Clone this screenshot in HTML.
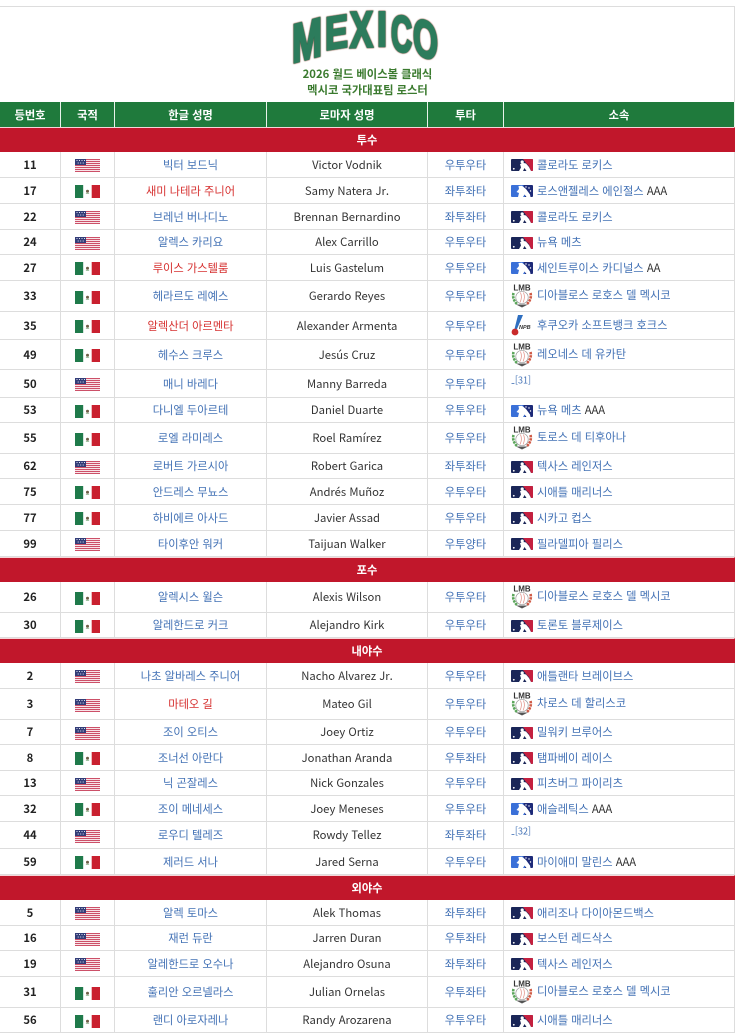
<!DOCTYPE html>
<html lang="ko"><head><meta charset="utf-8"><title>멕시코 로스터</title>
<style>
html,body{margin:0;padding:0;background:#fff;width:736px;height:1035px;overflow:hidden}
body{font-family:"Liberation Sans","Noto Sans CJK KR",sans-serif}
table{position:absolute;left:0;top:6px;width:735px;table-layout:fixed;border-collapse:separate;border-spacing:0;border-top:1px solid #ddd;font-family:"Noto Sans CJK KR","Liberation Sans",sans-serif;font-size:11.25px;line-height:14px;color:#333}
td,th{padding:0;box-sizing:border-box;border-right:1px solid #ddd;border-bottom:1px solid #ddd;text-align:center;overflow:hidden;white-space:nowrap}
tr.h th{background:#1f7a3c;color:#fff;font-weight:700;border-color:#e8f2ea;border-bottom:0;height:25px}
tr.s td{background:#c1172b;color:#fff;font-weight:700;border:0;border-top:1px solid #f8d5d9;height:25px;border-right:1px solid #c1172b}
td.n{font-weight:700;color:#222}
td.b,td.k,td.a{color:#4271b5}
td.k.r{color:#d6302f}
td.a{text-align:left;padding-left:7px}
td.a span.x{color:#333}
.f{display:block;margin:0 auto;width:25px;height:13px;position:relative;top:1px}
.a svg{vertical-align:middle;margin-right:4px}
.a sup{font-size:9px;line-height:0;color:#4271b5}
.top{position:absolute;left:0;top:0;width:735px;height:102px}
.t{position:absolute;left:0;width:735px;text-align:center;font:700 11.3px/14px "Noto Sans CJK KR","Liberation Sans",sans-serif;color:#3a7a2e}
</style></head><body>
<svg width="0" height="0" style="position:absolute"><defs>
<symbol id="us" viewBox="0 0 25 13"><rect width="25" height="13" fill="#f8e4e8"/><g fill="#cc5068"><rect y="0" width="25" height="1"/><rect y="2" width="25" height="1"/><rect y="4" width="25" height="1"/><rect y="6" width="25" height="1"/><rect y="8" width="25" height="1"/><rect y="10" width="25" height="1"/><rect y="12" width="25" height="1"/></g><rect width="11" height="6" fill="#333d78"/><g fill="#dfe3f2"><rect x="1.5" y="1" width="1" height="1"/><rect x="4" y="1" width="1" height="1"/><rect x="6.5" y="1" width="1" height="1"/><rect x="9" y="1" width="1" height="1"/><rect x="2.7" y="3.5" width="1" height="1"/><rect x="5.2" y="3.5" width="1" height="1"/><rect x="7.7" y="3.5" width="1" height="1"/></g></symbol>
<symbol id="mx" viewBox="0 0 25 13"><rect width="8.3" height="13" fill="#1f7a4a"/><rect x="8.3" width="8.4" height="13" fill="#fff"/><rect x="16.7" width="8.3" height="13" fill="#c9202f"/><circle cx="12.5" cy="6.3" r="1.5" fill="#6f5f48"/><path d="M10.9 8q1.6 1.1 3.2 0" stroke="#6f9f70" stroke-width=".7" fill="none"/></symbol>
<symbol id="mlb" viewBox="0 0 22 12"><rect width="22" height="12" rx="1" fill="#1a2658"/><path d="M12 0H21Q22 0 22 1V11Q22 12 21 12H20L18 7 15 4Z" fill="#c4203f"/><circle cx="11.2" cy="3" r="1.6" fill="#fff"/><path d="M9 5 12.8 4 15 4.5 18 8 20 12H15.5L13.5 9 12 12H8L10 8.5Z" fill="#fff"/><circle cx="2.8" cy="9.8" r=".9" fill="#fff"/></symbol>
<symbol id="milb" viewBox="0 0 22 12"><path d="M1 0H14V12H1Q0 12 0 11V1Q0 0 1 0Z" fill="#3a70d8"/><path d="M12.5 0H21Q22 0 22 1V11Q22 12 21 12H14Z" fill="#1d2a78"/><path d="M7.5 1 11 .8 15 4 19 9.5 19.5 12H15.5L13.5 9.5 12 12H7L8 8 5.5 7 8 4Z" fill="#fff"/><g fill="#fff"><circle cx="15" cy="2" r=".7"/><circle cx="18" cy="3" r=".7"/><circle cx="19.5" cy="6" r=".7"/></g></symbol>
<symbol id="lmb" viewBox="0 0 22 26"><path d="M2.5 10Q1 16 6 21" stroke="#5aa55a" stroke-width="2.6" fill="none" stroke-dasharray="2.4 .8"/><path d="M19.5 10Q21 16 16 21" stroke="#cf5a45" stroke-width="2.6" fill="none" stroke-dasharray="2.4 .8"/><circle cx="11" cy="14.5" r="6.2" fill="#fff" stroke="#999" stroke-width=".7"/><path d="M9.5 9.5Q11.5 14.5 9 19.5M12.5 9.5Q14.5 14.5 12 19.5" stroke="#e08a80" stroke-width=".7" fill="none"/><path d="M5 21.5H17L11 24.5Z" fill="#555"/></symbol>
<symbol id="npb" viewBox="0 0 22 22"><path d="M7 0H12L6 14H3.5Z" fill="#2f6fc0"/><circle cx="4" cy="17" r="3.4" fill="#c92a2a"/></symbol>
</defs></svg>

<div class="top">
<svg width="735" height="70" style="position:absolute;left:0;top:0;overflow:visible" font-family="Liberation Sans" font-weight="700" font-size="40">
<g fill="#2c7c5c" stroke="#2c7c5c" stroke-width="1.8" style="filter:drop-shadow(0 0 .5px #14503a) drop-shadow(0 0 .5px #d66a5a)">
<text transform="matrix(.9 -.24 0 1.36 292 63)">M</text>
<text transform="matrix(.86 -.13 0 1.16 325 50)">E</text>
<text transform="matrix(.86 -.03 0 1.27 350 47.5)">X</text>
<text transform="matrix(.9 0 0 1.24 377 46)">I</text>
<text transform="matrix(.73 .1 0 1.27 391 50)">C</text>
<text transform="matrix(.8 .27 0 1.3 413 53)">O</text>
</g></svg>
<div class="t" style="top:67px">2026 월드 베이스볼 클래식</div>
<div class="t" style="top:83px">멕시코 국가대표팀 로스터</div>
</div>

<table style="top:6px">
<colgroup><col style="width:61px"><col style="width:54px"><col style="width:152px"><col style="width:161px"><col style="width:76px"><col></colgroup>
<tr><td colspan="6" style="height:95px;border:0;border-right:1px solid #ddd;background:transparent"></td></tr>
<tr class="h"><th>등번호</th><th>국적</th><th>한글 성명</th><th>로마자 성명</th><th>투타</th><th>소속</th></tr>
<tr class="s"><td colspan="6">투수</td></tr>
<tr style="height:26px"><td class="n">11</td><td><svg class="f"><use href="#us"/></svg></td><td class="k">빅터 보드닉</td><td>Victor Vodnik</td><td class="b">우투우타</td><td class="a"><svg width="22" height="12"><use href="#mlb"/></svg>콜로라도 로키스</td></tr>
<tr style="height:26px"><td class="n">17</td><td><svg class="f"><use href="#mx"/></svg></td><td class="k r">새미 나테라 주니어</td><td>Samy Natera Jr.</td><td class="b">좌투좌타</td><td class="a"><svg width="22" height="12"><use href="#milb"/></svg>로스앤젤레스 에인절스 <span class="x">AAA</span></td></tr>
<tr style="height:26px"><td class="n">22</td><td><svg class="f"><use href="#us"/></svg></td><td class="k">브레넌 버나디노</td><td>Brennan Bernardino</td><td class="b">좌투좌타</td><td class="a"><svg width="22" height="12"><use href="#mlb"/></svg>콜로라도 로키스</td></tr>
<tr style="height:25px"><td class="n">24</td><td><svg class="f"><use href="#us"/></svg></td><td class="k">알렉스 카리요</td><td>Alex Carrillo</td><td class="b">우투우타</td><td class="a"><svg width="22" height="12"><use href="#mlb"/></svg>뉴욕 메츠</td></tr>
<tr style="height:26px"><td class="n">27</td><td><svg class="f"><use href="#mx"/></svg></td><td class="k r">루이스 가스텔룸</td><td>Luis Gastelum</td><td class="b">우투우타</td><td class="a"><svg width="22" height="12"><use href="#milb"/></svg>세인트루이스 카디널스 <span class="x">AA</span></td></tr>
<tr style="height:31px"><td class="n">33</td><td><svg class="f"><use href="#mx"/></svg></td><td class="k">헤라르도 레예스</td><td>Gerardo Reyes</td><td class="b">우투우타</td><td class="a"><svg width="22" height="26" viewBox="0 0 22 26"><use href="#lmb" width="22" height="26"/><text x="11" y="7.5" text-anchor="middle" font-family="Liberation Sans" font-weight="700" font-size="8" fill="#333">LMB</text></svg>디아블로스 로호스 델 멕시코</td></tr>
<tr style="height:28px"><td class="n">35</td><td><svg class="f"><use href="#mx"/></svg></td><td class="k r">알렉산더 아르멘타</td><td>Alexander Armenta</td><td class="b">우투우타</td><td class="a"><svg width="22" height="22" viewBox="0 0 22 22"><use href="#npb" width="22" height="22"/><text x="8" y="14" font-family="Liberation Sans" font-weight="700" font-style="italic" font-size="5.5" fill="#333">NPB</text></svg>후쿠오카 소프트뱅크 호크스</td></tr>
<tr style="height:30px"><td class="n">49</td><td><svg class="f"><use href="#mx"/></svg></td><td class="k">헤수스 크루스</td><td>Jesús Cruz</td><td class="b">우투우타</td><td class="a"><svg width="22" height="26" viewBox="0 0 22 26"><use href="#lmb" width="22" height="26"/><text x="11" y="7.5" text-anchor="middle" font-family="Liberation Sans" font-weight="700" font-size="8" fill="#333">LMB</text></svg>레오네스 데 유카탄</td></tr>
<tr style="height:28px"><td class="n">50</td><td><svg class="f"><use href="#us"/></svg></td><td class="k">매니 바레다</td><td>Manny Barreda</td><td class="b">우투우타</td><td class="a">-<sup>[31]</sup></td></tr>
<tr style="height:25px"><td class="n">53</td><td><svg class="f"><use href="#mx"/></svg></td><td class="k">다니엘 두아르테</td><td>Daniel Duarte</td><td class="b">우투우타</td><td class="a"><svg width="22" height="12"><use href="#milb"/></svg>뉴욕 메츠 <span class="x">AAA</span></td></tr>
<tr style="height:31px"><td class="n">55</td><td><svg class="f"><use href="#mx"/></svg></td><td class="k">로엘 라미레스</td><td>Roel Ramírez</td><td class="b">우투우타</td><td class="a"><svg width="22" height="26" viewBox="0 0 22 26"><use href="#lmb" width="22" height="26"/><text x="11" y="7.5" text-anchor="middle" font-family="Liberation Sans" font-weight="700" font-size="8" fill="#333">LMB</text></svg>토로스 데 티후아나</td></tr>
<tr style="height:25px"><td class="n">62</td><td><svg class="f"><use href="#us"/></svg></td><td class="k">로버트 가르시아</td><td>Robert Garica</td><td class="b">좌투좌타</td><td class="a"><svg width="22" height="12"><use href="#mlb"/></svg>텍사스 레인저스</td></tr>
<tr style="height:26px"><td class="n">75</td><td><svg class="f"><use href="#mx"/></svg></td><td class="k">안드레스 무뇨스</td><td>Andrés Muñoz</td><td class="b">우투우타</td><td class="a"><svg width="22" height="12"><use href="#mlb"/></svg>시애틀 매리너스</td></tr>
<tr style="height:26px"><td class="n">77</td><td><svg class="f"><use href="#mx"/></svg></td><td class="k">하비에르 아사드</td><td>Javier Assad</td><td class="b">우투우타</td><td class="a"><svg width="22" height="12"><use href="#mlb"/></svg>시카고 컵스</td></tr>
<tr style="height:26px"><td class="n">99</td><td><svg class="f"><use href="#us"/></svg></td><td class="k">타이후안 워커</td><td>Taijuan Walker</td><td class="b">우투양타</td><td class="a"><svg width="22" height="12"><use href="#mlb"/></svg>필라델피아 필리스</td></tr>
<tr class="s"><td colspan="6">포수</td></tr>
<tr style="height:31px"><td class="n">26</td><td><svg class="f"><use href="#mx"/></svg></td><td class="k">알렉시스 윌슨</td><td>Alexis Wilson</td><td class="b">우투우타</td><td class="a"><svg width="22" height="26" viewBox="0 0 22 26"><use href="#lmb" width="22" height="26"/><text x="11" y="7.5" text-anchor="middle" font-family="Liberation Sans" font-weight="700" font-size="8" fill="#333">LMB</text></svg>디아블로스 로호스 델 멕시코</td></tr>
<tr style="height:25px"><td class="n">30</td><td><svg class="f"><use href="#mx"/></svg></td><td class="k">알레한드로 커크</td><td>Alejandro Kirk</td><td class="b">우투우타</td><td class="a"><svg width="22" height="12"><use href="#mlb"/></svg>토론토 블루제이스</td></tr>
<tr class="s"><td colspan="6">내야수</td></tr>
<tr style="height:26px"><td class="n">2</td><td><svg class="f"><use href="#us"/></svg></td><td class="k">나초 알바레스 주니어</td><td>Nacho Alvarez Jr.</td><td class="b">우투우타</td><td class="a"><svg width="22" height="12"><use href="#mlb"/></svg>애틀랜타 브레이브스</td></tr>
<tr style="height:31px"><td class="n">3</td><td><svg class="f"><use href="#us"/></svg></td><td class="k r">마테오 길</td><td>Mateo Gil</td><td class="b">우투우타</td><td class="a"><svg width="22" height="26" viewBox="0 0 22 26"><use href="#lmb" width="22" height="26"/><text x="11" y="7.5" text-anchor="middle" font-family="Liberation Sans" font-weight="700" font-size="8" fill="#333">LMB</text></svg>차로스 데 할리스코</td></tr>
<tr style="height:25px"><td class="n">7</td><td><svg class="f"><use href="#us"/></svg></td><td class="k">조이 오티스</td><td>Joey Ortiz</td><td class="b">우투우타</td><td class="a"><svg width="22" height="12"><use href="#mlb"/></svg>밀워키 브루어스</td></tr>
<tr style="height:26px"><td class="n">8</td><td><svg class="f"><use href="#mx"/></svg></td><td class="k">조너선 아란다</td><td>Jonathan Aranda</td><td class="b">우투좌타</td><td class="a"><svg width="22" height="12"><use href="#mlb"/></svg>탬파베이 레이스</td></tr>
<tr style="height:25px"><td class="n">13</td><td><svg class="f"><use href="#us"/></svg></td><td class="k">닉 곤잘레스</td><td>Nick Gonzales</td><td class="b">우투우타</td><td class="a"><svg width="22" height="12"><use href="#mlb"/></svg>피츠버그 파이리츠</td></tr>
<tr style="height:26px"><td class="n">32</td><td><svg class="f"><use href="#mx"/></svg></td><td class="k">조이 메네세스</td><td>Joey Meneses</td><td class="b">우투우타</td><td class="a"><svg width="22" height="12"><use href="#milb"/></svg>애슬레틱스 <span class="x">AAA</span></td></tr>
<tr style="height:27px"><td class="n">44</td><td><svg class="f"><use href="#us"/></svg></td><td class="k">로우디 텔레즈</td><td>Rowdy Tellez</td><td class="b">좌투좌타</td><td class="a">-<sup>[32]</sup></td></tr>
<tr style="height:26px"><td class="n">59</td><td><svg class="f"><use href="#mx"/></svg></td><td class="k">제러드 서나</td><td>Jared Serna</td><td class="b">우투우타</td><td class="a"><svg width="22" height="12"><use href="#milb"/></svg>마이애미 말린스 <span class="x">AAA</span></td></tr>
<tr class="s"><td colspan="6">외야수</td></tr>
<tr style="height:26px"><td class="n">5</td><td><svg class="f"><use href="#us"/></svg></td><td class="k">알렉 토마스</td><td>Alek Thomas</td><td class="b">좌투좌타</td><td class="a"><svg width="22" height="12"><use href="#mlb"/></svg>애리조나 다이아몬드백스</td></tr>
<tr style="height:25px"><td class="n">16</td><td><svg class="f"><use href="#us"/></svg></td><td class="k">재런 듀란</td><td>Jarren Duran</td><td class="b">우투좌타</td><td class="a"><svg width="22" height="12"><use href="#mlb"/></svg>보스턴 레드삭스</td></tr>
<tr style="height:26px"><td class="n">19</td><td><svg class="f"><use href="#us"/></svg></td><td class="k">알레한드로 오수나</td><td>Alejandro Osuna</td><td class="b">좌투좌타</td><td class="a"><svg width="22" height="12"><use href="#mlb"/></svg>텍사스 레인저스</td></tr>
<tr style="height:31px"><td class="n">31</td><td><svg class="f"><use href="#mx"/></svg></td><td class="k">훌리안 오르넬라스</td><td>Julian Ornelas</td><td class="b">우투좌타</td><td class="a"><svg width="22" height="26" viewBox="0 0 22 26"><use href="#lmb" width="22" height="26"/><text x="11" y="7.5" text-anchor="middle" font-family="Liberation Sans" font-weight="700" font-size="8" fill="#333">LMB</text></svg>디아블로스 로호스 델 멕시코</td></tr>
<tr style="height:25px"><td class="n">56</td><td><svg class="f"><use href="#mx"/></svg></td><td class="k">랜디 아로자레나</td><td>Randy Arozarena</td><td class="b">우투우타</td><td class="a"><svg width="22" height="12"><use href="#mlb"/></svg>시애틀 매리너스</td></tr>
</table>
</body></html>
